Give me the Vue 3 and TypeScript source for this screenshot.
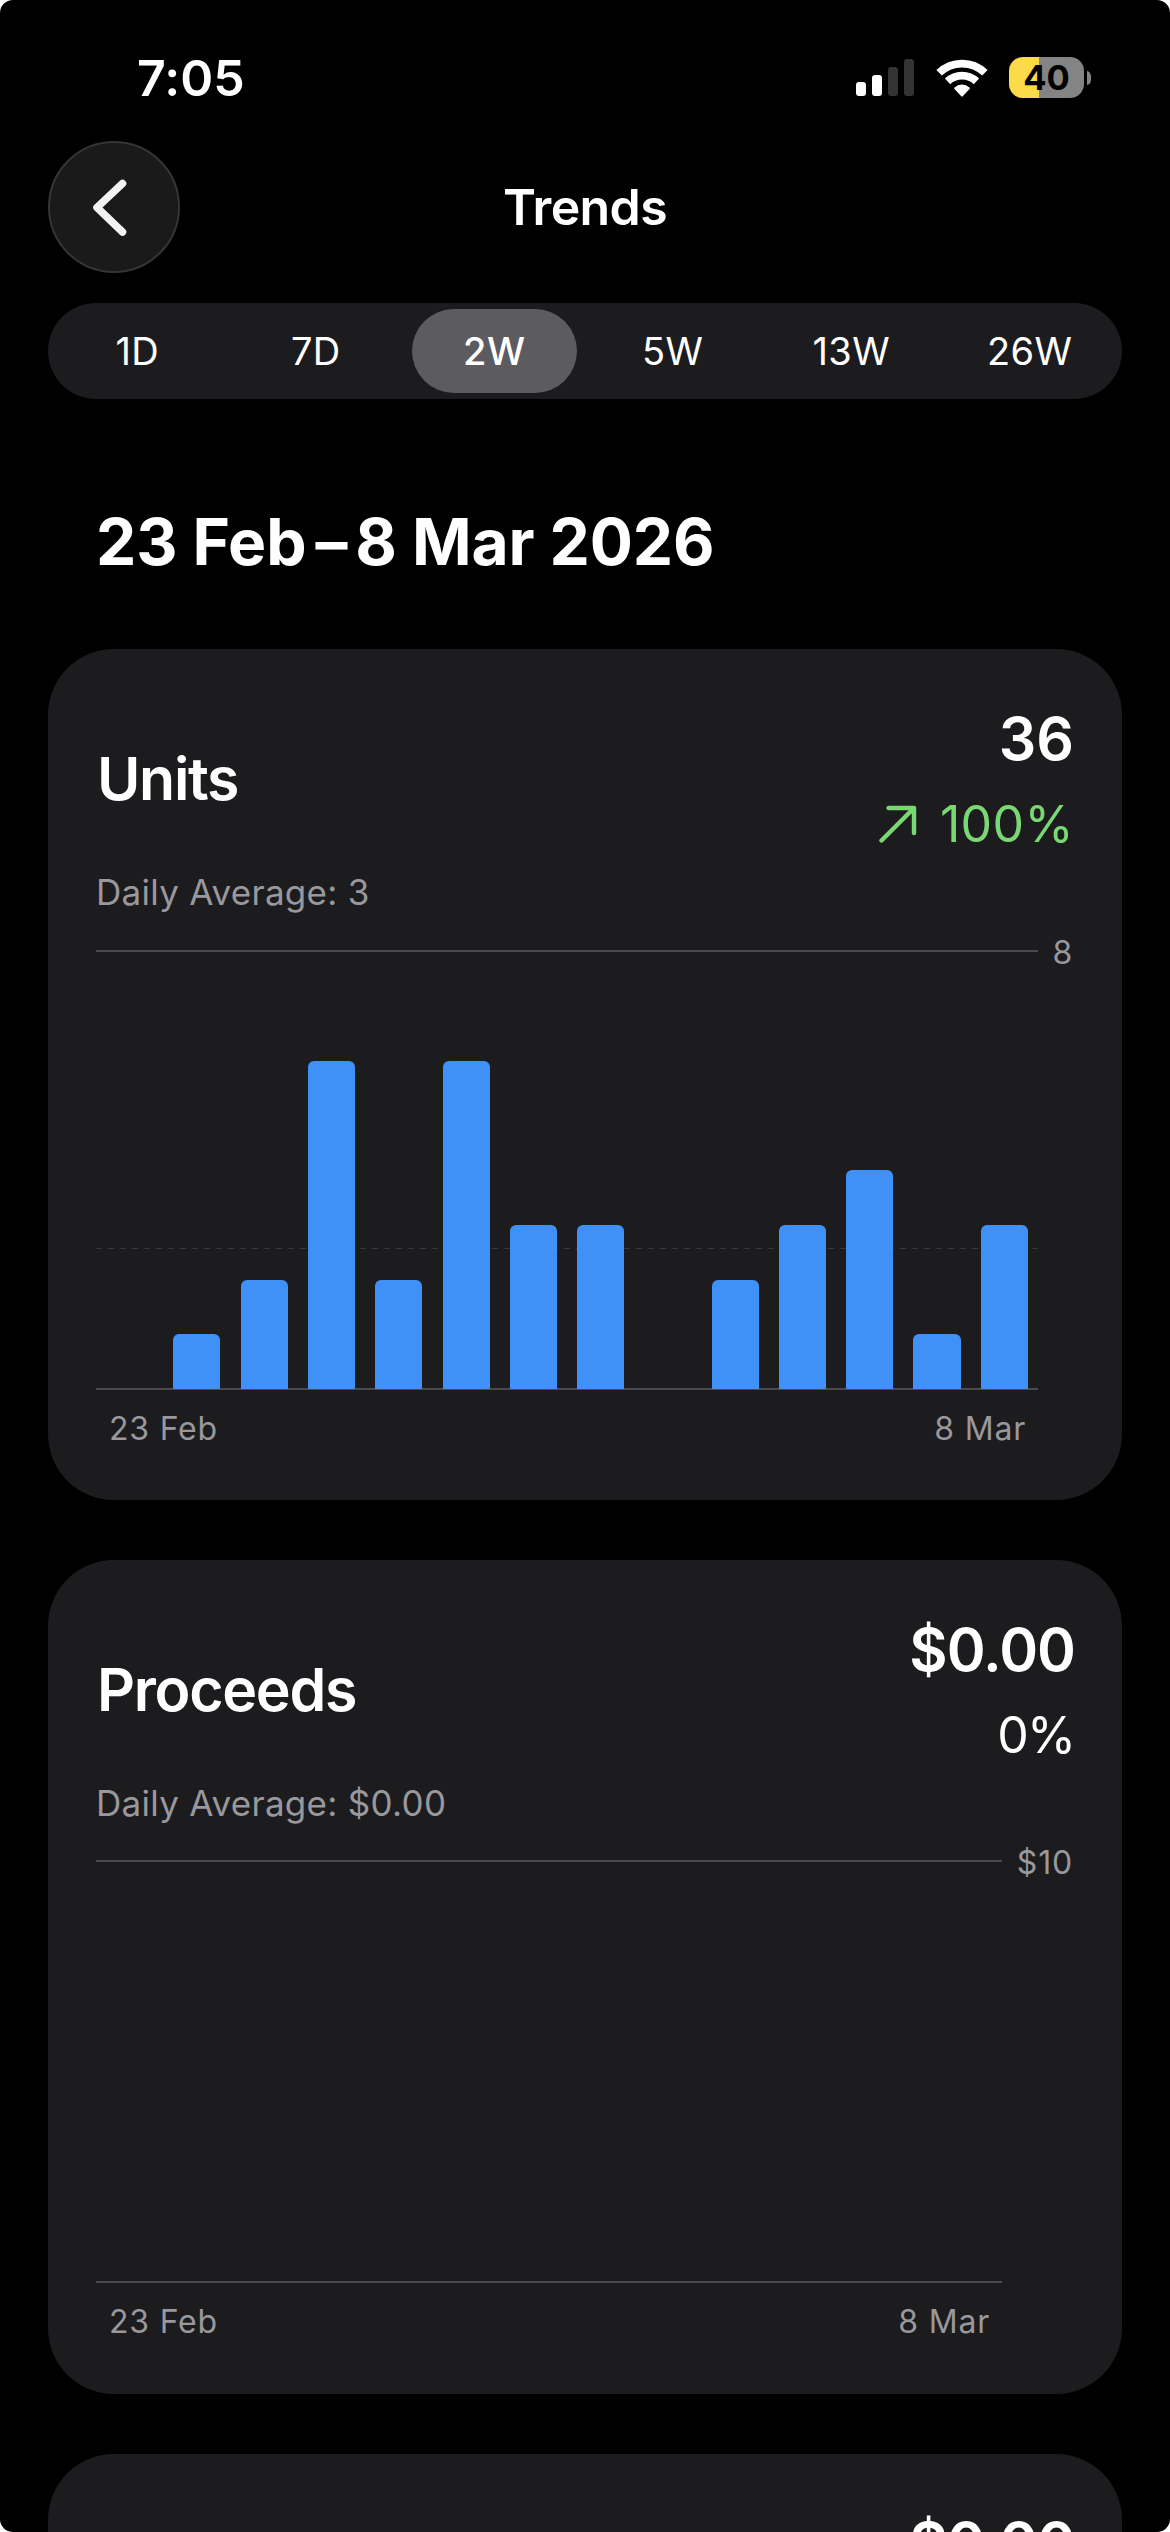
<script setup lang="ts">
interface Metric {
  id: string
  title: string
  value: string
  change: string
  rising: boolean
  average: string
  axisMax: string
  axisWidth: number
  max: number
  mean: number | null
  data: number[]
}

const ranges: string[] = ['1D', '7D', '2W', '5W', '13W', '26W']
const selectedRange = '2W'

const metrics: Metric[] = [
  {
    id: 'units',
    title: 'Units',
    value: '36',
    change: '100%',
    rising: true,
    average: '3',
    axisMax: '8',
    axisWidth: 36,
    max: 8,
    mean: 36 / 14,
    data: [0, 1, 2, 6, 2, 6, 3, 3, 0, 2, 3, 4, 1, 3],
  },
  {
    id: 'proceeds',
    title: 'Proceeds',
    value: '$0.00',
    change: '0%',
    rising: false,
    average: '$0.00',
    axisMax: '$10',
    axisWidth: 72,
    max: 10,
    mean: null,
    data: [],
  },
]

const barHeight = (value: number, max: number) => ({ height: `${(value / max) * 100}%` })
</script>

<template>
  <div class="backdrop">
    <main class="screen">
      <div class="status">
        <span class="time">7:05</span>
        <div class="indicators">
          <svg class="signal" width="58" height="37" viewBox="0 0 58 37">
            <rect x="0" y="23" width="10" height="14" rx="3" fill="#fff" />
            <rect x="16" y="16" width="10" height="21" rx="3" fill="#fff" />
            <rect x="32" y="8" width="10" height="29" rx="3" fill="#333" />
            <rect x="48" y="0" width="10" height="37" rx="3" fill="#333" />
          </svg>
          <svg class="wifi" width="52" height="38" viewBox="0 0 52 38">
            <g fill="none" stroke="#fff" stroke-width="7.8">
              <path d="M3.1 13.8A33 33 0 0 1 48.9 13.8" />
              <path d="M11.6 22.3A21 21 0 0 1 40.4 22.3" />
            </g>
            <path d="M26 36.6L19.2 29.2A10 10 0 0 1 32.8 29.2Z" fill="#fff" stroke="#fff" stroke-width="2" stroke-linejoin="round" />
          </svg>
          <div class="battery"><span>40</span></div>
          <i class="nub"></i>
        </div>
      </div>

      <header class="nav">
        <button class="back" aria-label="Back">
          <svg width="132" height="132" viewBox="0 0 132 132">
            <path d="M74.5 42.5L49 66.5L74.5 91" fill="none" stroke="#f2f2f2" stroke-width="7.6" stroke-linecap="round" stroke-linejoin="round" />
          </svg>
        </button>
        <h1>Trends</h1>
      </header>

      <nav class="ranges">
        <span v-for="r in ranges" :key="r" class="range" :class="{ selected: r === selectedRange }">{{ r }}</span>
      </nav>

      <h2 class="period">23 Feb<span class="dash">–</span>8 Mar 2026</h2>

      <section v-for="m in metrics" :key="m.id" class="card" :class="m.id">
        <div class="head">
          <h3>{{ m.title }}</h3>
          <div class="figures">
            <div class="value">{{ m.value }}</div>
            <div class="change" :class="m.rising ? 'rising' : 'flat'">
              <svg v-if="m.rising" width="38" height="38" viewBox="0 0 38 38">
                <path d="M9.5 3H35V28M35 3L2.5 35.5" fill="none" stroke="currentColor" stroke-width="4.4" stroke-linecap="round" stroke-linejoin="round" />
              </svg>
              <span>{{ m.change }}</span>
            </div>
          </div>
        </div>
        <div class="average">Daily Average: {{ m.average }}</div>
        <div class="chart">
          <div class="plot-column">
            <div class="plot">
              <div v-if="m.mean !== null" class="mean"></div>
              <div v-for="(v, i) in m.data" :key="i" class="slot">
                <div class="bar" :style="barHeight(v, m.max)"></div>
              </div>
            </div>
            <div class="days"><span>23 Feb</span><span>8 Mar</span></div>
          </div>
          <div class="axis" :style="{ width: `${m.axisWidth}px` }">{{ m.axisMax }}</div>
        </div>
      </section>

      <section class="card next">
        <div class="head">
          <div class="figures"><div class="value">$0.00</div></div>
        </div>
      </section>
    </main>
  </div>
</template>

<style>
body {
  margin: 0;
  background: #fff;
}
</style>

<style scoped>
.backdrop {
  width: 1170px;
  height: 2532px;
  overflow: hidden;
  background: #fff;
}
.screen {
  box-sizing: border-box;
  width: 1170px;
  height: 2532px;
  padding: 0 48px;
  overflow: hidden;
  border-radius: 13px;
  background: #000;
  color: #fff;
  font-family: Inter, "Liberation Sans", sans-serif;
}
h1, h2, h3 {
  margin: 0;
}
.status {
  display: flex;
  justify-content: space-between;
  height: 141px;
}
.time {
  margin: 48px 0 0 89px;
  font-size: 50px;
  line-height: 60px;
  font-weight: 600;
  letter-spacing: 0.1px;
}
.indicators {
  display: flex;
  align-items: flex-start;
  margin-right: 31px;
}
.signal {
  margin: 59px 21.5px 0 0;
}
.wifi {
  margin: 59px 21.5px 0 0;
}
.battery {
  width: 75px;
  height: 41px;
  margin-top: 57px;
  border-radius: 14px;
  background: linear-gradient(90deg, #fcdb4b 30px, #848484 30px);
  color: #000;
  font-size: 34.5px;
  line-height: 41px;
  font-weight: 700;
  text-align: center;
}
.nub {
  width: 4px;
  height: 14px;
  margin: 70.5px 0 0 3px;
  border-radius: 0 5px 5px 0 / 0 7px 7px 0;
  background: #848484;
}
.nav {
  display: grid;
  grid-template-columns: 132px 1fr 132px;
  height: 132px;
}
.back {
  box-sizing: border-box;
  display: flex;
  align-items: center;
  justify-content: center;
  width: 132px;
  height: 132px;
  padding: 0;
  border: 2px solid #353535;
  border-radius: 50%;
  background: #1a1a1a;
}
.back svg {
  flex: none;
}
.nav h1 {
  font-size: 50px;
  line-height: 132px;
  font-weight: 600;
  letter-spacing: -0.6px;
  text-align: center;
}
.ranges {
  box-sizing: border-box;
  display: grid;
  grid-template-columns: repeat(6, 1fr);
  height: 96px;
  margin-top: 30px;
  padding-right: 3px;
  border-radius: 48px;
  background: #1c1c1e;
}
.range {
  margin: 6px 7px;
  border-radius: 42px;
  font-size: 38px;
  line-height: 84px;
  font-weight: 400;
  letter-spacing: 0.4px;
  text-align: center;
}
.selected {
  background: #5b5b60;
  font-weight: 500;
}
.period {
  height: 80px;
  margin: 103px 0 67px 48px;
  font-size: 64px;
  line-height: 80px;
  font-weight: 700;
  letter-spacing: -0.1px;
  white-space: nowrap;
}
.dash {
  margin: 0 8px 0 9px;
}
.card {
  box-sizing: border-box;
  height: 834px;
  margin-bottom: 60px;
  padding: 54px 48px 0;
  border-radius: 66px;
  background: #1c1c1e;
}
.units {
  height: 851px;
}
.head {
  display: flex;
  align-items: center;
  justify-content: space-between;
}
.next .head {
  justify-content: flex-end;
}
.head h3 {
  margin-left: 1px;
  font-size: 59px;
  line-height: 72px;
  font-weight: 600;
  letter-spacing: -1.3px;
}
.value {
  margin-right: -1px;
  font-size: 59px;
  line-height: 72px;
  font-weight: 600;
  letter-spacing: -1px;
  text-align: right;
}
.units .value {
  margin-right: 0;
  letter-spacing: 0;
}
.change {
  display: flex;
  align-items: center;
  justify-content: flex-end;
  gap: 23px;
  margin-top: 19px;
  font-size: 50px;
  line-height: 60px;
}
.rising {
  color: #79d873;
  letter-spacing: 0.4px;
}
.flat {
  letter-spacing: -2px;
}
.average {
  height: 42px;
  margin-top: 17px;
  color: #98989d;
  font-size: 35px;
  line-height: 42px;
  letter-spacing: 0.3px;
  white-space: nowrap;
}
.chart {
  display: flex;
  margin-top: 37px;
}
.proceeds .chart {
  margin-top: 36px;
}
.plot-column {
  flex: 1;
}
.plot {
  position: relative;
  display: flex;
  height: 436px;
  border-top: 2px solid #4a4a4c;
  border-bottom: 2px solid #4a4a4c;
}
.proceeds .plot {
  height: 419px;
}
.mean {
  position: absolute;
  top: 296px;
  left: 0;
  width: 100%;
  height: 1px;
  background: repeating-linear-gradient(90deg, #38383a 0 6px, transparent 6px 12px);
}
.slot {
  position: relative;
  display: flex;
  flex: 1;
  align-items: flex-end;
  justify-content: center;
  height: 438px;
  margin-top: -1px;
}
.bar {
  width: 70%;
  border-radius: 6px 6px 0 0;
  background: #3f91f8;
}
.days {
  display: flex;
  justify-content: space-between;
  margin-top: 18px;
  padding: 0 12px 0 13px;
  color: #98989d;
  font-size: 32px;
  line-height: 41px;
  letter-spacing: 0.8px;
}
.axis {
  box-sizing: border-box;
  height: 40px;
  margin-top: -17px;
  padding-right: 1px;
  color: #98989d;
  font-size: 32px;
  line-height: 40px;
  letter-spacing: 0.8px;
  text-align: right;
}
</style>
